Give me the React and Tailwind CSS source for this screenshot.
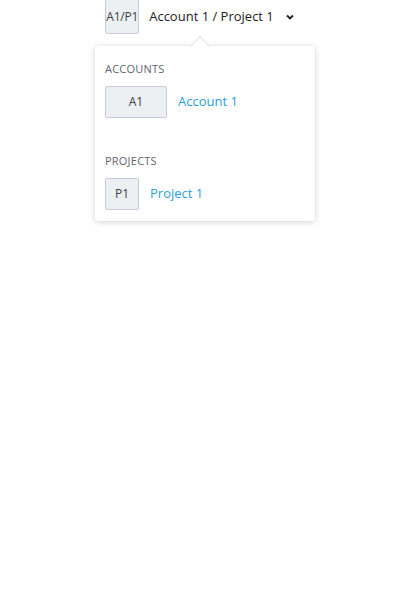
import React from 'react';

const font = { fontFamily: '"Open Sans", "Noto Sans", sans-serif' };

const Section = ({ label, code, name, boxW }) => (
  <div className="flex flex-col">
    <div className="text-[11px] leading-[14px] uppercase tracking-[0.02em] text-[#5f6670]">{label}</div>
    <div className="mt-[10px] flex items-center">
      <div className={`${boxW} h-[32px] flex items-center justify-center rounded-[2px] border border-[#c3ccd6] bg-[#edf0f3] text-[12px] text-[#3c4248]`}>
        {code}
      </div>
      <span className="ml-[11px] text-[13px] text-[#2a9fd6]">{name}</span>
    </div>
  </div>
);

export default function App() {
  return (
    <div className="w-[400px] h-[600px] bg-white relative" style={font}>
      <div className="flex justify-center items-center">
        <div className="w-[34px] h-[34px] flex items-center justify-center rounded-b-[3px] border border-t-0 border-[#c3ccd6] bg-[#edf0f3] text-[12px] tracking-[-0.02em] text-[#3c4248]">
          A1/P1
        </div>
        <span className="ml-[10px] text-[13px] text-[#1d2126]">Account 1 / Project 1</span>
        <svg className="ml-[11px]" width="10" height="10" viewBox="0 0 10 10">
          <path d="M2 3.5 L5 6.5 L8 3.5" fill="none" stroke="#1d2126" strokeWidth="1.8" />
        </svg>
      </div>

      <div className="absolute left-[95px] top-[46px] w-[220px] h-[175px] rounded-[3px] bg-white shadow-[0_1px_6px_rgba(0,0,0,0.18)]">
        <div className="absolute left-[98px] -top-[7px] w-[14px] h-[14px] rotate-45 bg-white border-l border-t border-[#e1e4e8]" />
        <div className="relative flex flex-col gap-[36px] px-[10px] pt-[16px]">
          <Section label="Accounts" code="A1" name="Account 1" boxW="w-[62px]" />
          <Section label="Projects" code="P1" name="Project 1" boxW="w-[34px]" />
        </div>
      </div>
    </div>
  );
}
